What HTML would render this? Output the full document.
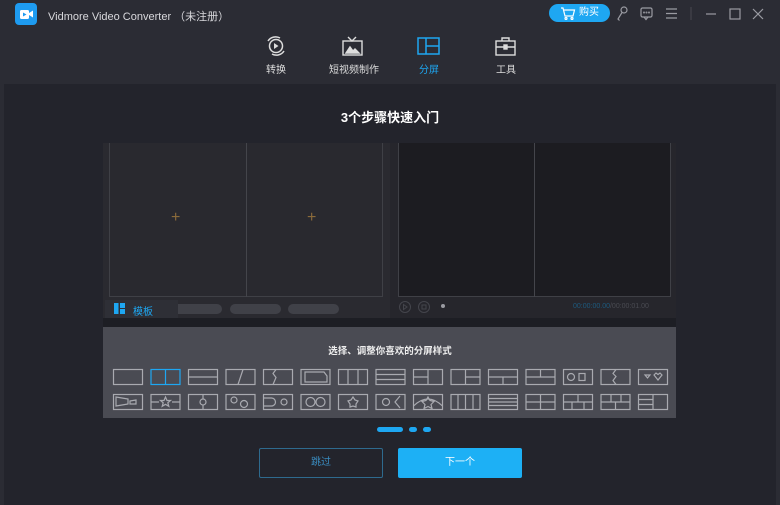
<!DOCTYPE html>
<html><head><meta charset="utf-8"><style>
*{margin:0;padding:0;box-sizing:border-box}
body{width:780px;height:505px;overflow:hidden;background:#2b2c34;font-family:"Liberation Sans","Noto Sans CJK SC",sans-serif;position:relative;color:#ddd}
.abs{position:absolute}
</style></head><body>
<div class="abs" style="left:15px;top:3px;width:22px;height:22px;background:#1e9bf0;border-radius:4px"></div>
<svg class="abs" style="left:15px;top:3px" width="22" height="22"><rect x="5" y="7" width="9" height="9" rx="1.5" fill="#fff"/><path d="M14 10l4-2.5v7L14 12z" fill="#fff"/><path d="M8 9.5l3.5 2-3.5 2z" fill="#1e9bf0"/></svg>
<div class="abs" style="left:48px;top:8px;font-size:11px;color:#d8d8dc">Vidmore Video Converter （未注册）</div>
<div class="abs" style="left:549px;top:4px;width:61px;height:18px;background:#1ea7f2;border-radius:9px;font-size:10px;color:#fff;line-height:18px;padding-left:30px">购买</div>
<svg class="abs" style="left:560px;top:7px" width="16" height="13" fill="none" stroke="#fff" stroke-width="1.2"><path d="M1 1h2l2 8h8l1.5-6H4"/><circle cx="6" cy="11.5" r="1"/><circle cx="12" cy="11.5" r="1"/></svg>
<svg class="abs" style="left:614px;top:5px" width="120" height="18" fill="none" stroke="#9a9ba2" stroke-width="1.2">
<circle cx="10" cy="5" r="3"/><path d="M8 7.5L4 14l1.5 1.5"/>
<rect x="27" y="3" width="11" height="9" rx="1.5"/><path d="M30 12l2 2.5 2-2.5"/><circle cx="30" cy="7.5" r=".4"/><circle cx="32.5" cy="7.5" r=".4"/><circle cx="35" cy="7.5" r=".4"/>
<path d="M52 4h11M52 8.5h11M52 13h11"/>
<path d="M77 2v13" stroke="#44454c"/>
<path d="M92 9h10"/>
</svg>
<svg class="abs" style="left:726px;top:8px" width="50" height="13" fill="none" stroke="#9a9ba2" stroke-width="1.2"><rect x="4" y="1" width="10" height="10"/><path d="M27 1l10 10M37 1L27 11"/></svg>
<svg class="abs" style="left:262px;top:35px" width="28" height="24" fill="none" stroke="#ddd" stroke-width="1.5"><circle cx="14" cy="11" r="6.5"/><path d="M12 8l4.5 3-4.5 3z" fill="#ddd" stroke="none"/><path d="M6 6a9 9 0 0 1 12-3M22 16a9 9 0 0 1-12 3"/></svg>
<div class="abs" style="left:266px;top:61px;font-size:10px;color:#ddd">转换</div>
<svg class="abs" style="left:340px;top:35px" width="26" height="24" fill="none" stroke="#ddd" stroke-width="1.4"><rect x="3" y="6" width="19" height="14"/><path d="M8 2l4 4 4-4"/><path d="M6 18l4-6 3 4 2-2 4 4z" fill="#ddd"/></svg>
<div class="abs" style="left:329px;top:61px;font-size:10px;color:#ddd">短视频制作</div>
<svg class="abs" style="left:416px;top:35px" width="26" height="24" fill="none" stroke="#1ea7f2" stroke-width="1.5"><rect x="2" y="3" width="21" height="16"/><path d="M10 3v16M10 11h13"/></svg>
<div class="abs" style="left:419px;top:61px;font-size:10px;color:#1ea7f2">分屏</div>
<svg class="abs" style="left:493px;top:35px" width="26" height="24" fill="none" stroke="#ddd" stroke-width="1.4"><rect x="3" y="6" width="19" height="14"/><path d="M9 6V3h7v3M3 12h19"/><rect x="11" y="10" width="3" height="4" fill="#ddd"/></svg>
<div class="abs" style="left:496px;top:61px;font-size:10px;color:#ddd">工具</div>
<div class="abs" style="left:4px;top:84px;width:772px;height:421px;background:#23242c"></div>
<div class="abs" style="left:0;top:107px;width:780px;text-align:center;font-size:13px;font-weight:bold;color:#fff">3个步骤快速入门</div>
<div class="abs" style="left:103px;top:143px;width:288px;height:175px;background:#2a2a30"></div>
<div class="abs" style="left:109px;top:143px;width:274px;height:154px;border:1px solid #3f4046;border-top:none;background:#29292f"></div>
<div class="abs" style="left:246px;top:143px;width:1px;height:154px;background:#44454b"></div>
<div class="abs" style="left:171px;top:211px;color:#8a6a3a;font-size:16px;line-height:14px">+</div>
<div class="abs" style="left:307px;top:211px;color:#8a6a3a;font-size:16px;line-height:14px">+</div>
<div class="abs" style="left:390px;top:143px;width:286px;height:175px;background:#26262c"></div>
<div class="abs" style="left:398px;top:143px;width:273px;height:154px;border:1px solid #3f4046;border-top:none;background:#1c1c21"></div>
<div class="abs" style="left:534px;top:143px;width:1px;height:154px;background:#44454b"></div>
<div class="abs" style="left:172px;top:304px;width:50px;height:10px;border-radius:5px;background:#404148"></div>
<div class="abs" style="left:230px;top:304px;width:51px;height:10px;border-radius:5px;background:#404148"></div>
<div class="abs" style="left:288px;top:304px;width:51px;height:10px;border-radius:5px;background:#404148"></div>
<div class="abs" style="left:105px;top:300px;width:73px;height:18px;background:#2e2f36"></div>
<svg class="abs" style="left:114px;top:303px" width="12" height="12" fill="#1ea7f2"><rect x="0" y="0" width="4.5" height="11"/><rect x="6" y="0" width="5" height="5"/><rect x="6" y="6" width="5" height="5"/></svg>
<div class="abs" style="left:133px;top:303px;font-size:10px;color:#1ea7f2">模板</div>
<svg class="abs" style="left:398px;top:300px" width="50" height="14" fill="none" stroke="#44454c"><circle cx="7" cy="7" r="5.5"/><path d="M5.5 4.5l3.5 2.5-3.5 2.5z"/><circle cx="26" cy="7" r="5.5"/><rect x="24" y="5" width="4" height="4"/><circle cx="45" cy="6" r="2" fill="#9a9ba2" stroke="none"/></svg>
<div class="abs" style="left:573px;top:303px;font-size:7px;color:#4a4b52"><span style="color:#1d5a7e">00:00:00.00</span>/00:00:01.00</div>
<div class="abs" style="left:103px;top:318px;width:573px;height:9px;background:#1d1e24"></div>
<div class="abs" style="left:103px;top:327px;width:573px;height:91px;background:#4a4b53"></div>
<div class="abs" style="left:0;top:343px;width:780px;text-align:center;font-size:9.5px;font-weight:bold;color:#eee">选择、调整你喜欢的分屏样式</div>
<svg class="abs" style="left:0;top:0" width="780" height="505" fill="none" stroke="#a9aab0" stroke-width="1.2">
<rect x="113.5" y="369.5" width="29" height="15"/>
<rect x="151" y="369.5" width="29" height="15" stroke="#1ea7f2"/><path d="M165.5 369.5v15" stroke="#1ea7f2"/>
<rect x="188.5" y="369.5" width="29" height="15"/><path d="M188.5 377h29"/>
<rect x="226" y="369.5" width="29" height="15"/><path d="M243 369.5l-5 15"/>
<rect x="263.5" y="369.5" width="29" height="15"/><path d="M276 369.5l-3 4 3 4-3 7"/>
<rect x="301" y="369.5" width="29" height="15"/><path d="M305 372h19l3 4v6h-22z"/>
<rect x="338.5" y="369.5" width="29" height="15"/><path d="M348 369.5v15M358 369.5v15"/>
<rect x="376" y="369.5" width="29" height="15"/><path d="M376 374.5h29M376 379.5h29"/>
<rect x="413.5" y="369.5" width="29" height="15"/><path d="M428 369.5v15M413.5 377h14.5"/>
<rect x="451" y="369.5" width="29" height="15"/><path d="M465.5 369.5v15M465.5 377h14.5"/>
<rect x="488.5" y="369.5" width="29" height="15"/><path d="M488.5 377h29M503 377v7.5"/>
<rect x="526" y="369.5" width="29" height="15"/><path d="M526 377h29M540.5 369.5v7.5"/>
<rect x="563.5" y="369.5" width="29" height="15"/><circle cx="571" cy="377" r="3.5"/><rect x="579" y="373.5" width="6" height="7"/>
<rect x="601" y="369.5" width="29" height="15"/><path d="M616 369.5l-3 4 3 3-3 4 3 4"/>
<rect x="638.5" y="369.5" width="29" height="15"/><path d="M645 375l2.5 3 2.5-3zM654 375l4 5 4-5-2-2-2 1.5-2-1.5z"/>
<rect x="113.5" y="394.5" width="29" height="15"/><path d="M116 397l12 2v5l-12 2zM130 401l6-1v4l-6 0z"/>
<rect x="151" y="394.5" width="29" height="15"/><path d="M151 402h8M172 402h8M165.5 397l1.5 3.5h3.5l-2.7 2.3 1 3.5-3.3-2-3.3 2 1-3.5-2.7-2.3h3.5z"/>
<rect x="188.5" y="394.5" width="29" height="15"/><circle cx="203" cy="402" r="3"/><path d="M203 394.5v4.5M203 405v4.5"/>
<rect x="226" y="394.5" width="29" height="15"/><circle cx="234" cy="400" r="3"/><circle cx="244" cy="404" r="3.5"/>
<rect x="263.5" y="394.5" width="29" height="15"/><path d="M263.5 398h8a4 4 0 0 1 0 8h-8"/><circle cx="284" cy="402" r="3"/>
<rect x="301" y="394.5" width="29" height="15"/><circle cx="310.5" cy="402" r="4.5"/><circle cx="320.5" cy="402" r="4.5"/>
<rect x="338.5" y="394.5" width="29" height="15"/><path d="M353 397l2 3 3 1-2 3 0 3-3-1-3 1 0-3-2-3 3-1z"/>
<rect x="376" y="394.5" width="29" height="15"/><circle cx="386" cy="402" r="3.5"/><path d="M400 396l-5 6 5 6"/>
<rect x="413.5" y="394.5" width="29" height="15"/><path d="M413.5 406q14.5-14 29 0M428 397l2 3.5 4 1-3 3 1 4-4-2-4 2 1-4-3-3 4-1z"/>
<rect x="451" y="394.5" width="29" height="15"/><path d="M458 394.5v15M465.5 394.5v15M473 394.5v15"/>
<rect x="488.5" y="394.5" width="29" height="15"/><path d="M488.5 398.5h29M488.5 402h29M488.5 405.5h29"/>
<rect x="526" y="394.5" width="29" height="15"/><path d="M526 402h29M540.5 394.5v15"/>
<rect x="563.5" y="394.5" width="29" height="15"/><path d="M563.5 402h29M578 394.5v7.5M572 402v7.5M584 402v7.5"/>
<rect x="601" y="394.5" width="29" height="15"/><path d="M601 402h29M611 394.5v7.5M621 394.5v7.5M615.5 402v7.5"/>
<rect x="638.5" y="394.5" width="29" height="15"/><path d="M653 394.5v15M638.5 399.5h14.5M638.5 404.5h14.5"/>
</svg>
<div class="abs" style="left:377px;top:427px;width:26px;height:5px;border-radius:3px;background:#1ea7f2"></div>
<div class="abs" style="left:409px;top:427px;width:8px;height:5px;border-radius:3px;background:#1ea7f2"></div>
<div class="abs" style="left:423px;top:427px;width:8px;height:5px;border-radius:3px;background:#1ea7f2"></div>
<div class="abs" style="left:259px;top:448px;width:124px;height:30px;border:1px solid #2e6a8e;border-radius:2px;text-align:center;line-height:28px;font-size:10px;color:#3a8cc0">跳过</div>
<div class="abs" style="left:398px;top:448px;width:124px;height:30px;background:#1db0f5;border-radius:2px;text-align:center;line-height:30px;font-size:10px;color:#fff">下一个</div>
</body></html>
